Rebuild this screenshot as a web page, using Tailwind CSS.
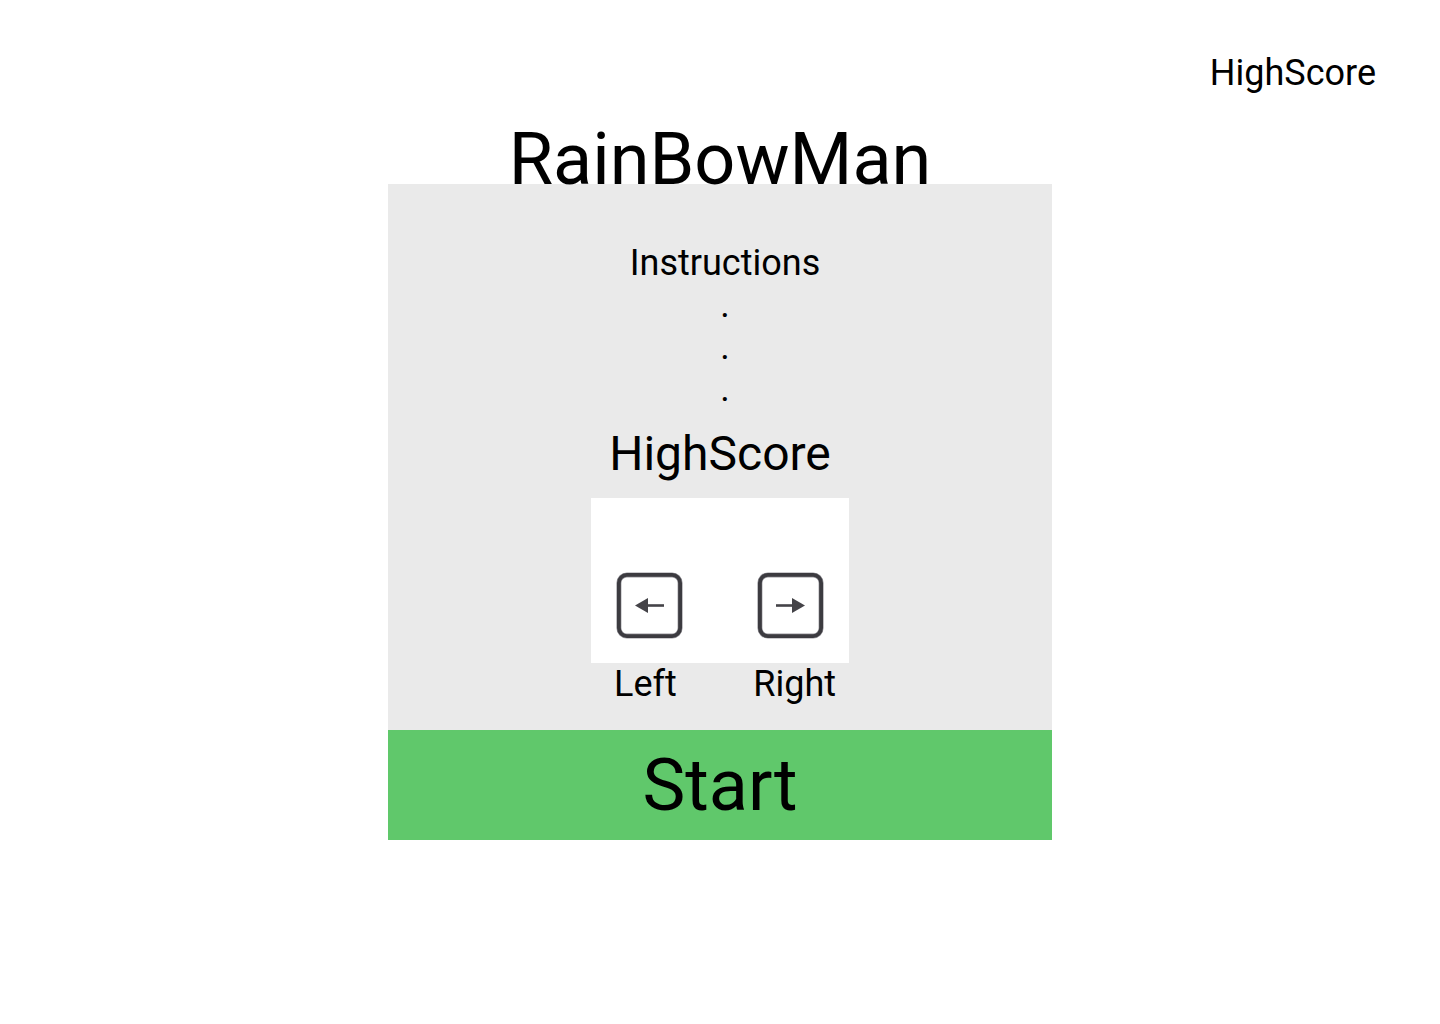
<!DOCTYPE html>
<html lang="en">
<head>
<meta charset="utf-8">
<title>RainBowMan</title>
<script src="https://cdn.jsdelivr.net/npm/@tailwindcss/browser@4"></script>
</head>
<body class="min-h-screen bg-white font-['Roboto',sans-serif] text-black">
<header class="flex justify-end px-16 pt-[52px]">
<a href="#highscore" class="text-4xl leading-[42px]">HighScore</a>
</header>
<main class="mx-auto w-full max-w-[664px]">
<h1 class="mt-6 -mb-[18px] text-center text-7xl leading-[84px]">RainBowMan</h1>
<section class="flex flex-col items-center bg-[#eaeaea] pt-[58px] pb-[25px]">
<h2 class="pl-[10px] text-4xl leading-[42px]">Instructions</h2>
<p class="pl-[10px] text-center text-4xl leading-[42px]">.<br>.<br>.</p>
<h2 id="highscore" class="mt-4 text-5xl leading-[56px]">HighScore</h2>
<div class="mt-4 flex h-[165px] w-[258px] justify-between bg-white px-[25px] pt-[74px]">
<svg class="size-[67px]" viewBox="0 0 67 67" role="img" aria-label="Left arrow key"><rect x="2.900" y="2.900" width="61.200" height="61.200" rx="8" fill="#fff" stroke="#99989d" stroke-width="5"/><rect x="2.900" y="2.900" width="61.200" height="61.200" rx="8" fill="none" stroke="#3c3b40" stroke-width="3.800"/><path d="M31 33.500h17" stroke="#444348" stroke-width="2.600"/><path d="M19 33.500l13-7.600v15.200z" fill="#444348"/></svg>
<svg class="size-[67px]" viewBox="0 0 67 67" role="img" aria-label="Right arrow key"><rect x="2.900" y="2.900" width="61.200" height="61.200" rx="8" fill="#fff" stroke="#99989d" stroke-width="5"/><rect x="2.900" y="2.900" width="61.200" height="61.200" rx="8" fill="none" stroke="#3c3b40" stroke-width="3.800"/><path d="M19 33.500h17" stroke="#444348" stroke-width="2.600"/><path d="M48 33.500l-13-7.600v15.200z" fill="#444348"/></svg>
</div>
<div class="flex w-[232px] justify-between pl-[10px] text-4xl leading-[42px]"><span>Left</span><span>Right</span></div>
</section>
<button type="button" class="block h-[110px] w-full bg-[#60c86b] pt-[2px] text-7xl leading-[84px]">Start</button>
</main>
</body>
</html>
